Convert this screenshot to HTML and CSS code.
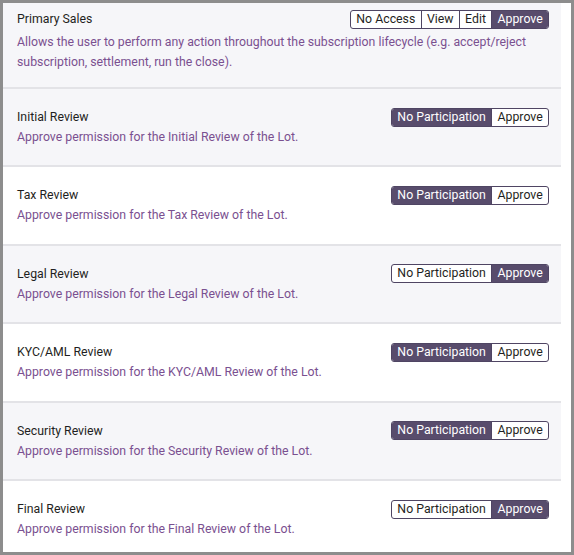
FILE: index.html
```html
<!DOCTYPE html>
<html lang="en">
<head>
  <meta charset="UTF-8">
  <title>Permissions</title>
  <link rel="stylesheet" href="styles.css">
</head>
<body>
  <div class="frame">
    <div class="list">

      <div class="perm first">
        <div class="perm-head">
          <span class="perm-title">Primary Sales</span>
          <div class="seg">
            <span class="seg-item">No Access</span>
            <span class="seg-item">View</span>
            <span class="seg-item">Edit</span>
            <span class="seg-item on">Approve</span>
          </div>
        </div>
        <p class="perm-desc">Allows the user to perform any action throughout the subscription lifecycle (e.g. accept/reject subscription, settlement, run the close).</p>
      </div>

      <div class="perm">
        <div class="perm-head">
          <span class="perm-title">Initial Review</span>
          <div class="seg">
            <span class="seg-item on">No Participation</span>
            <span class="seg-item">Approve</span>
          </div>
        </div>
        <p class="perm-desc">Approve permission for the Initial Review of the Lot.</p>
      </div>

      <div class="perm plain">
        <div class="perm-head">
          <span class="perm-title">Tax Review</span>
          <div class="seg">
            <span class="seg-item on">No Participation</span>
            <span class="seg-item">Approve</span>
          </div>
        </div>
        <p class="perm-desc">Approve permission for the Tax Review of the Lot.</p>
      </div>

      <div class="perm">
        <div class="perm-head">
          <span class="perm-title">Legal Review</span>
          <div class="seg">
            <span class="seg-item">No Participation</span>
            <span class="seg-item on">Approve</span>
          </div>
        </div>
        <p class="perm-desc">Approve permission for the Legal Review of the Lot.</p>
      </div>

      <div class="perm plain">
        <div class="perm-head">
          <span class="perm-title">KYC/AML Review</span>
          <div class="seg">
            <span class="seg-item on">No Participation</span>
            <span class="seg-item">Approve</span>
          </div>
        </div>
        <p class="perm-desc">Approve permission for the KYC/AML Review of the Lot.</p>
      </div>

      <div class="perm">
        <div class="perm-head">
          <span class="perm-title">Security Review</span>
          <div class="seg">
            <span class="seg-item on">No Participation</span>
            <span class="seg-item">Approve</span>
          </div>
        </div>
        <p class="perm-desc">Approve permission for the Security Review of the Lot.</p>
      </div>

      <div class="perm plain last">
        <div class="perm-head">
          <span class="perm-title">Final Review</span>
          <div class="seg">
            <span class="seg-item">No Participation</span>
            <span class="seg-item on">Approve</span>
          </div>
        </div>
        <p class="perm-desc">Approve permission for the Final Review of the Lot.</p>
      </div>

    </div>
  </div>
</body>
</html>
```

FILE: styles.css
```css
html, body {
  margin: 0;
  padding: 0;
}
body {
  font-family: Roboto, "Liberation Sans", sans-serif;
  font-size: 12.3px;
  color: #1f1f22;
}
.frame {
  box-sizing: border-box;
  width: 574px;
  height: 555px;
  border: 3px solid #8d8d8d;
  padding-right: 10px;
  background: #fff;
  overflow: hidden;
}
.list {
  display: flex;
  flex-direction: column;
}
.perm {
  padding: 18px 12px 18px 14px;
  background: #f6f6f9;
  border-bottom: 2px solid #e3e3e7;
}
.perm.plain {
  background: #fff;
}
.perm.first {
  padding-top: 6px;
  padding-bottom: 15px;
}
.perm.last {
  border-bottom: none;
}
.perm-head {
  display: flex;
  justify-content: space-between;
  align-items: center;
  height: 20px;
}
.perm-title {
  line-height: 20px;
}
.perm-desc {
  margin: 0;
  line-height: 20.4px;
  color: #7a5090;
}
.perm.first .perm-desc {
  margin-top: 3px;
  line-height: 20px;
}
.seg {
  display: flex;
  border: 1px solid #4f4563;
  border-radius: 3px;
  overflow: hidden;
  background: #fff;
}
.seg-item {
  padding: 0 5.3px;
  line-height: 17px;
  color: #1f1f22;
  border-left: 1px solid #4f4563;
}
.seg-item:first-child {
  border-left: none;
}
.seg-item.on {
  background: #584c6c;
  color: #fff;
}
```
